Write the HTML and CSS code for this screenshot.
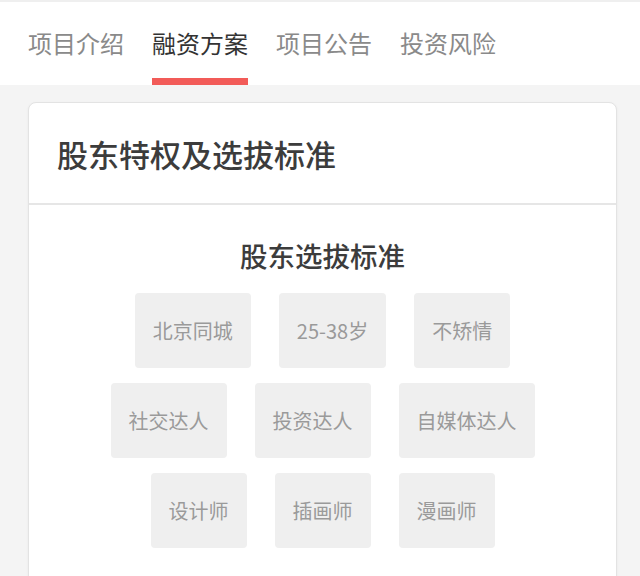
FILE: index.html
```html
<!DOCTYPE html>
<html>
<head>
    <meta charset="utf-8">
    <link rel="stylesheet" href="styles.css">
</head>
<body>
    <div class="tabs">
        <div class="tab">项目介绍</div>
        <div class="tab tab-active">融资方案</div>
        <div class="tab">项目公告</div>
        <div class="tab">投资风险</div>
    </div>

    <div class="content">
        <div class="card">
            <div class="card-header">股东特权及选拔标准</div>
            <div class="card-body">
                <div class="section-title">股东选拔标准</div>
                <div class="tag-list">
                    <div class="tag">北京同城</div>
                    <div class="tag">25-38岁</div>
                    <div class="tag">不矫情</div>
                    <div class="tag">社交达人</div>
                    <div class="tag">投资达人</div>
                    <div class="tag">自媒体达人</div>
                    <div class="tag">设计师</div>
                    <div class="tag">插画师</div>
                    <div class="tag">漫画师</div>
                </div>
            </div>
        </div>
    </div>
</body>
</html>
```

FILE: styles.css
```css
body {
    margin: 0;
    height: 576px;
    overflow: hidden;
    font-family: "Noto Sans CJK SC", "Noto Sans", sans-serif;
    background: #f4f4f4;
    color: #333;
}

.tabs {
    display: flex;
    gap: 28px;
    height: 83px;
    padding: 0 28px;
    background: #fff;
    border-top: 2px solid #efefef;
}

.tab {
    position: relative;
    font-size: 24px;
    line-height: 82px;
    color: #8a8a8a;
}

.tab-active {
    color: #333;
}

.tab-active::after {
    content: "";
    position: absolute;
    left: 0;
    right: 0;
    bottom: 0;
    height: 7px;
    background: #f25b58;
}

.content {
    padding: 17px 23px 0 28px;
}

.card {
    background: #fff;
    border: 1px solid #e3e3e3;
    border-radius: 8px;
    box-shadow: 0 1px 3px rgba(0, 0, 0, 0.05);
    min-height: 520px;
}

.card-header {
    height: 100px;
    display: flex;
    align-items: center;
    padding-left: 28px;
    font-size: 31px;
    font-weight: 500;
    color: #3c3c3c;
    border-bottom: 2px solid #e6e6e6;
}

.card-body {
    padding-top: 32px;
}

.section-title {
    text-align: center;
    font-size: 27.5px;
    font-weight: 500;
    color: #3c3c3c;
    line-height: 36px;
    margin-bottom: 20px;
}

.tag-list {
    display: flex;
    flex-wrap: wrap;
    justify-content: center;
    gap: 15px 28px;
    max-width: 480px;
    margin: 0 auto;
}

.tag {
    height: 75px;
    line-height: 75px;
    padding: 0 18px;
    font-size: 20px;
    color: #9a9a9a;
    background: #efefef;
    border-radius: 4px;
}
```
